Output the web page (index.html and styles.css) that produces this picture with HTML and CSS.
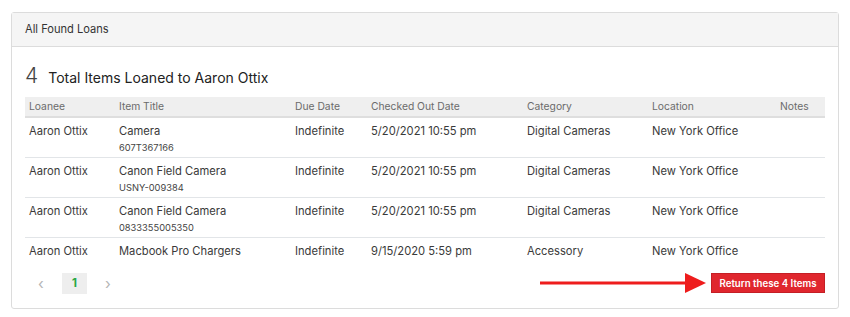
FILE: index.html
```html
<!DOCTYPE html>
<html>
<head>
<meta charset="utf-8">
<link rel="stylesheet" href="styles.css">
</head>
<body>
<div class="card">
  <div class="card-header">All Found Loans</div>
  <div class="card-body">
    <h2 class="title"><span class="count">4</span><span class="title-text">Total Items Loaned to Aaron Ottix</span></h2>
    <table class="loans">
      <colgroup>
        <col class="c1"><col class="c2"><col class="c3"><col class="c4"><col class="c5"><col class="c6"><col class="c7">
      </colgroup>
      <thead>
        <tr><th>Loanee</th><th>Item Title</th><th>Due Date</th><th>Checked Out Date</th><th>Category</th><th>Location</th><th>Notes</th></tr>
      </thead>
      <tbody>
        <tr><td>Aaron Ottix</td><td>Camera<div class="sub">607T367166</div></td><td>Indefinite</td><td>5/20/2021 10:55 pm</td><td>Digital Cameras</td><td>New York Office</td><td></td></tr>
        <tr><td>Aaron Ottix</td><td>Canon Field Camera<div class="sub">USNY-009384</div></td><td>Indefinite</td><td>5/20/2021 10:55 pm</td><td>Digital Cameras</td><td>New York Office</td><td></td></tr>
        <tr><td>Aaron Ottix</td><td>Canon Field Camera<div class="sub">0833355005350</div></td><td>Indefinite</td><td>5/20/2021 10:55 pm</td><td>Digital Cameras</td><td>New York Office</td><td></td></tr>
        <tr class="last"><td>Aaron Ottix</td><td>Macbook Pro Chargers</td><td>Indefinite</td><td>9/15/2020 5:59 pm</td><td>Accessory</td><td>New York Office</td><td></td></tr>
      </tbody>
    </table>
    <div class="footer">
      <div class="pager">
        <span class="pg-arrow pg-prev">&#8249;</span>
        <span class="pg-num">1</span>
        <span class="pg-arrow pg-next">&#8250;</span>
      </div>
      <div class="actions">
        <svg class="pointer" width="166" height="22" viewBox="0 0 166 22">
          <rect x="0" y="9.5" width="148" height="3" fill="#ee1c1c"/>
          <polygon points="145,1 166,11 145,21" fill="#ee1c1c"/>
        </svg>
        <button class="btn-return">Return these 4 Items</button>
      </div>
    </div>
  </div>
</div>
</body>
</html>
```
FILE: styles.css
```css
html, body {
  margin: 0;
  padding: 0;
  background: #fff;
}
body {
  font-family: Inter, "Open Sans", "Liberation Sans", sans-serif;
  color: #3a3a3a;
  padding: 12px 11px 0 11px;
}
.card {
  width: 826px;
  border: 1px solid #dcdcdc;
  border-radius: 3px;
  box-sizing: content-box;
}
.card-header {
  background: #f5f5f5;
  border-bottom: 1px solid #dcdcdc;
  height: 33px;
  line-height: 33px;
  padding-left: 13px;
  font-size: 11.1px;
  color: #333;
}
.card-body {
  padding: 14px 13px 14px 13px;
}
.title {
  margin: 0 0 6px 0;
  font-weight: 400;
  display: flex;
  align-items: baseline;
  height: 30px;
  line-height: 30px;
}
.count {
  font-size: 21px;
  font-weight: 300;
  color: #444;
  margin-right: 10px;
}
.title-text {
  font-size: 14px;
  color: #222;
}
.loans {
  width: 800px;
  border-collapse: collapse;
  table-layout: fixed;
  font-size: 11.2px;
}
.c1 { width: 90px; }
.c2 { width: 176px; }
.c3 { width: 76px; }
.c4 { width: 156px; }
.c5 { width: 125px; }
.c6 { width: 128px; }
.c7 { width: 49px; }
.loans th {
  background: #efefef;
  border-bottom: 2px solid #dedede;
  text-align: left;
  font-weight: 400;
  font-size: 10.3px;
  color: #6b6b6b;
  height: 19px;
  padding: 0 4px;
  line-height: 19px;
}
.loans td {
  vertical-align: top;
  padding: 4px 4px 1px 4px;
  height: 34px;
  line-height: 18px;
  border-bottom: 1px solid #e2e5e8;
  color: #3a3a3a;
}
.loans tr.last td {
  border-bottom: none;
  height: 18px;
  padding-bottom: 2px;
}
.sub {
  font-size: 9.3px;
  line-height: 16px;
  color: #444;
}
.footer {
  display: flex;
  justify-content: space-between;
  align-items: center;
  margin-top: 10px;
}
.pager {
  display: flex;
  align-items: center;
}
.pg-arrow {
  color: #b5b5b5;
  font-size: 15px;
  text-align: center;
  line-height: 21px;
}
.pg-prev {
  width: 32px;
  margin-right: 5px;
}
.pg-next {
  width: 12px;
  margin-left: 15px;
}
.pg-num {
  background: #eeeeee;
  color: #28a745;
  font-weight: 700;
  font-size: 11.5px;
  width: 25px;
  height: 21px;
  line-height: 21px;
  text-align: center;
}
.actions {
  display: flex;
  align-items: center;
  gap: 5px;
}
.pointer {
  display: block;
}
.btn-return {
  background: #e0272e;
  border: 1px solid #c41f25;
  color: #fff;
  font-family: inherit;
  font-size: 9.7px;
  font-weight: 600;
  height: 20px;
  width: 114px;
  padding: 0;
  border-radius: 0;
}
```
